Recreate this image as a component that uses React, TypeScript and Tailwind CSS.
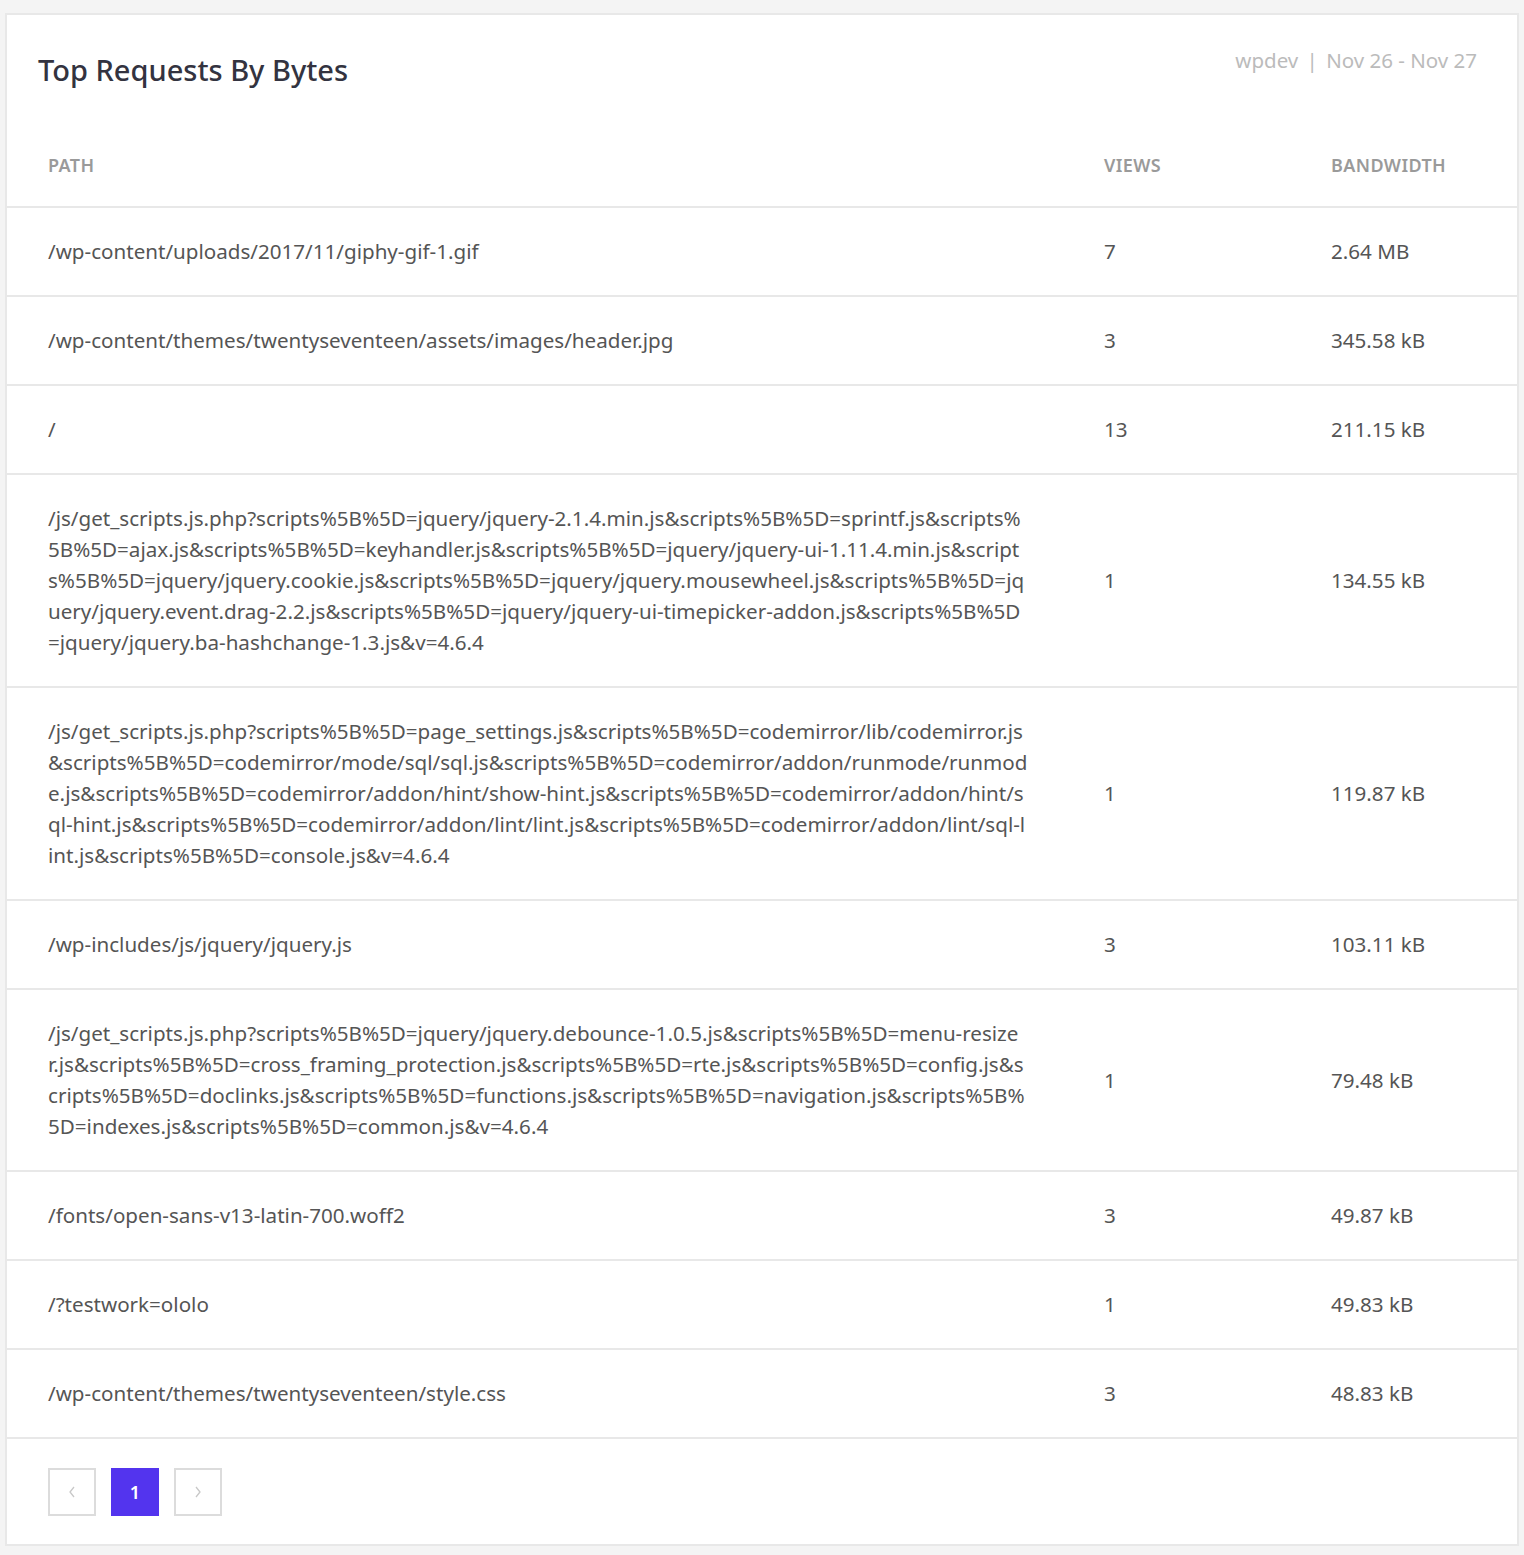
import React from "react";

const rows: { path: string; views: string; bw: string }[] = [
  { path: "/wp-content/uploads/2017/11/giphy-gif-1.gif", views: "7", bw: "2.64 MB" },
  { path: "/wp-content/themes/twentyseventeen/assets/images/header.jpg", views: "3", bw: "345.58 kB" },
  { path: "/", views: "13", bw: "211.15 kB" },
  {
    path: "/js/get_scripts.js.php?scripts%5B%5D=jquery/jquery-2.1.4.min.js&scripts%5B%5D=sprintf.js&scripts%5B%5D=ajax.js&scripts%5B%5D=keyhandler.js&scripts%5B%5D=jquery/jquery-ui-1.11.4.min.js&scripts%5B%5D=jquery/jquery.cookie.js&scripts%5B%5D=jquery/jquery.mousewheel.js&scripts%5B%5D=jquery/jquery.event.drag-2.2.js&scripts%5B%5D=jquery/jquery-ui-timepicker-addon.js&scripts%5B%5D=jquery/jquery.ba-hashchange-1.3.js&v=4.6.4",
    views: "1",
    bw: "134.55 kB",
  },
  {
    path: "/js/get_scripts.js.php?scripts%5B%5D=page_settings.js&scripts%5B%5D=codemirror/lib/codemirror.js&scripts%5B%5D=codemirror/mode/sql/sql.js&scripts%5B%5D=codemirror/addon/runmode/runmode.js&scripts%5B%5D=codemirror/addon/hint/show-hint.js&scripts%5B%5D=codemirror/addon/hint/sql-hint.js&scripts%5B%5D=codemirror/addon/lint/lint.js&scripts%5B%5D=codemirror/addon/lint/sql-lint.js&scripts%5B%5D=console.js&v=4.6.4",
    views: "1",
    bw: "119.87 kB",
  },
  { path: "/wp-includes/js/jquery/jquery.js", views: "3", bw: "103.11 kB" },
  {
    path: "/js/get_scripts.js.php?scripts%5B%5D=jquery/jquery.debounce-1.0.5.js&scripts%5B%5D=menu-resizer.js&scripts%5B%5D=cross_framing_protection.js&scripts%5B%5D=rte.js&scripts%5B%5D=config.js&scripts%5B%5D=doclinks.js&scripts%5B%5D=functions.js&scripts%5B%5D=navigation.js&scripts%5B%5D=indexes.js&scripts%5B%5D=common.js&v=4.6.4",
    views: "1",
    bw: "79.48 kB",
  },
  { path: "/fonts/open-sans-v13-latin-700.woff2", views: "3", bw: "49.87 kB" },
  { path: "/?testwork=ololo", views: "1", bw: "49.83 kB" },
  { path: "/wp-content/themes/twentyseventeen/style.css", views: "3", bw: "48.83 kB" },
];

export default function App() {
  return (
    <div className="min-h-[1555px] bg-[#f4f4f4] pt-[13px] font-['Open_Sans',sans-serif]">
      <div className="ml-[5px] w-[1514px] border-2 border-[#e8e8e8] bg-white">
        {/* header */}
        <div className="flex items-start justify-between pl-[31px] pr-[40px] pt-[33px]">
          <h1 className="font-['Lato',sans-serif] text-[29px] font-medium leading-[44px] text-[#333340]">
            Top Requests By Bytes
          </h1>
          <div className="-mt-[2px] text-[20.5px] leading-[28px] text-[#bbbbbb]">
            wpdev <span className="mx-[3px]">|</span> Nov 26 - Nov 27
          </div>
        </div>

        <div className="mt-[32px] grid grid-cols-[1097px_227px_1fr] border-b-2 border-[#e8e8e8] py-[31px] text-[18px] font-semibold leading-[20px] tracking-[0.4px] text-[#9a9a9a]">
          <div className="pl-[41px]">PATH</div>
          <div>VIEWS</div>
          <div>BANDWIDTH</div>
        </div>

        {rows.map((r, i) => (
          <div
            key={i}
            className="grid grid-cols-[1097px_227px_1fr] items-center border-b-2 border-[#e8e8e8] py-[28px] text-[20.6px] leading-[31px] text-[#555555]"
          >
            <div className="pl-[41px] pr-[76px] break-all">{r.path}</div>
            <div>{r.views}</div>
            <div>{r.bw}</div>
          </div>
        ))}

        {/* pagination */}
        <div className="flex gap-[15px] pl-[41px] pt-[29px] pb-[28px]">
          <button className="flex h-[48px] w-[48px] items-center justify-center border-2 border-[#dcdcdc] text-[#c8c8c8]">
            <svg width="10" height="14" viewBox="0 0 10 14" fill="none" stroke="currentColor" strokeWidth="1.3">
              <path d="M7 2 L3 7 L7 12" />
            </svg>
          </button>
          <button className="flex h-[48px] w-[48px] items-center justify-center bg-[#5334ee] text-[18px] font-semibold text-white">
            1
          </button>
          <button className="flex h-[48px] w-[48px] items-center justify-center border-2 border-[#dcdcdc] text-[#c8c8c8]">
            <svg width="10" height="14" viewBox="0 0 10 14" fill="none" stroke="currentColor" strokeWidth="1.3">
              <path d="M3 2 L7 7 L3 12" />
            </svg>
          </button>
        </div>
      </div>
    </div>
  );
}
